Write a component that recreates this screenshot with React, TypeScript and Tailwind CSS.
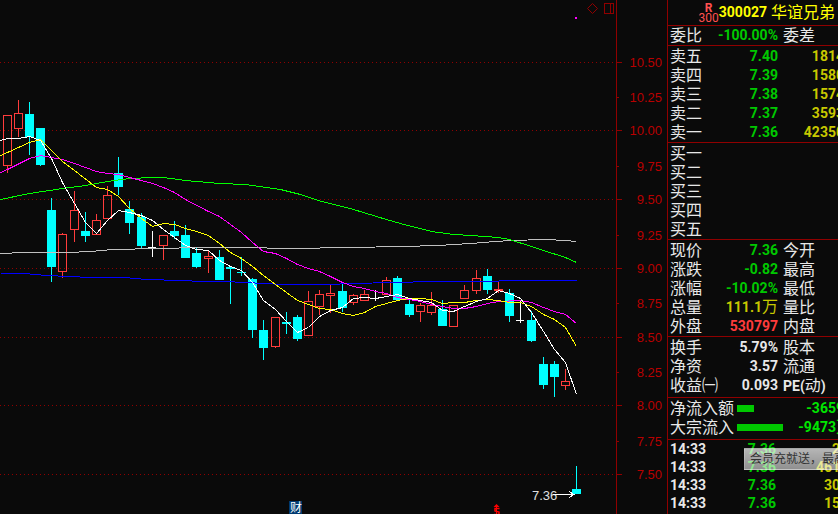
import { ReactNode } from 'react';
import clsx from 'clsx';

type Kind = 'up' | 'down' | 'flat';

// x, high, body top, body bottom, low, kind
type Candle = [number, number, number, number, number, Kind];

const candles: Candle[] = [
  [7, 115, 115, 166, 173, 'up'],
  [18, 100, 113, 129, 137, 'up'],
  [29, 102, 114, 137, 155, 'down'],
  [40, 128, 128, 165, 166, 'down'],
  [51, 198, 210, 267, 282, 'down'],
  [62, 233, 234, 272, 278, 'up'],
  [74, 191, 210, 230, 242, 'up'],
  [85, 212, 231, 236, 242, 'down'],
  [96, 214, 220, 235, 235, 'up'],
  [107, 186, 195, 219, 219, 'up'],
  [118, 157, 173, 187, 195, 'down'],
  [129, 201, 209, 223, 234, 'down'],
  [141, 213, 217, 246, 249, 'down'],
  [152, 231, 247, 248, 257, 'flat'],
  [163, 235, 235, 246, 260, 'up'],
  [174, 221, 231, 236, 239, 'down'],
  [185, 225, 235, 258, 258, 'down'],
  [196, 247, 253, 267, 268, 'down'],
  [208, 250, 256, 259, 273, 'up'],
  [219, 250, 257, 280, 280, 'down'],
  [230, 267, 267, 269, 304, 'down'],
  [241, 257, 272, 273, 276, 'down'],
  [252, 278, 279, 330, 338, 'down'],
  [263, 320, 330, 348, 360, 'down'],
  [275, 317, 317, 347, 348, 'up'],
  [286, 312, 322, 324, 334, 'down'],
  [297, 315, 317, 339, 341, 'down'],
  [308, 291, 301, 336, 336, 'up'],
  [319, 290, 294, 307, 315, 'up'],
  [330, 285, 293, 296, 313, 'up'],
  [342, 283, 291, 308, 312, 'down'],
  [353, 294, 295, 303, 305, 'up'],
  [364, 290, 294, 301, 301, 'up'],
  [375, 290, 298, 299, 301, 'flat'],
  [386, 277, 280, 295, 295, 'up'],
  [397, 276, 278, 300, 300, 'down'],
  [409, 299, 304, 315, 317, 'down'],
  [420, 303, 305, 312, 322, 'up'],
  [431, 292, 305, 313, 315, 'up'],
  [442, 300, 309, 326, 326, 'down'],
  [453, 305, 305, 327, 327, 'up'],
  [464, 285, 290, 299, 299, 'up'],
  [476, 270, 278, 291, 294, 'up'],
  [487, 269, 276, 290, 294, 'down'],
  [498, 281, 289, 291, 293, 'up'],
  [509, 289, 293, 316, 322, 'down'],
  [520, 301, 320, 321, 323, 'flat'],
  [531, 311, 320, 341, 342, 'down'],
  [543, 357, 364, 385, 389, 'down'],
  [554, 361, 364, 377, 397, 'down'],
  [565, 369, 381, 386, 390, 'up'],
  [576, 466, 489, 494, 494, 'down'],
];

const averages = [
  {
    color: '#0000ff',
    points: '0,273 24,273 46,275 90,277 124,277 146,279 180,280 203,281 225,281 283,284 335,284 345,283 400,282 425,281 470,281 528,280 540,280 560,280 576,280',
  },
  {
    color: '#c0c0c0',
    points: '0,253 24,252 68,252 90,251 112,249 158,248 200,247 240,247 292,248 348,247 403,246 437,245 470,243 495,241 510,240 545,239 565,240 576,241',
  },
  {
    color: '#00ff00',
    points: '0,199 29,193 62,188 85,185 107,181 129,178 152,177 163,177 185,180 219,183 245,184 280,189 300,194 318,200 353,209 386,219 400,223 431,231 453,234 471,235 498,237 509,239 531,246 543,250 565,257 576,262',
  },
  {
    color: '#ff00ff',
    points: '0,172 7,169 29,158 40,155 51,157 62,159 74,163 96,171 107,173 118,174 129,177 141,180 152,183 163,187 174,192 185,199 208,211 219,216 230,224 241,232 252,242 263,251 275,253 286,258 297,264 308,268 319,271 330,276 342,282 353,286 364,288 375,291 386,293 397,297 409,299 420,301 431,304 442,306 453,308 464,308 476,306 487,303 498,301 520,300 531,302 543,307 554,311 565,314 576,323',
  },
  {
    color: '#ffff00',
    points: '0,155 7,152 29,142 40,139 62,161 74,170 96,187 107,189 118,196 129,208 141,218 152,226 163,223 174,224 185,228 196,231 208,235 219,243 230,252 241,258 252,266 263,275 275,284 286,292 297,300 308,304 319,308 330,309 342,313 353,315 364,312 375,306 386,303 397,300 409,298 420,298 431,299 442,303 453,302 464,302 476,300 487,299 498,300 509,302 520,302 531,306 543,314 554,319 565,327 576,346',
  },
  {
    color: '#ffffff',
    points: '0,140 7,138 18,138 29,136 40,140 51,158 62,182 74,203 85,222 96,233 107,220 118,210 129,212 141,215 152,220 163,229 174,237 185,245 196,249 208,250 219,260 230,266 241,270 252,282 263,300 275,309 286,321 297,332 308,327 319,316 330,310 342,307 353,298 364,297 375,298 386,296 397,294 409,298 420,300 431,302 442,310 453,311 464,306 476,301 487,298 498,290 509,293 520,298 531,312 543,331 554,349 565,362 576,394',
  },
];

const scale = [
  { label: '10.50', y: 62 },
  { label: '10.25', y: 97 },
  { label: '10.00', y: 130 },
  { label: '9.75', y: 166 },
  { label: '9.50', y: 199 },
  { label: '9.25', y: 235 },
  { label: '9.00', y: 268 },
  { label: '8.75', y: 303 },
  { label: '8.50', y: 337 },
  { label: '8.25', y: 372 },
  { label: '8.00', y: 405 },
  { label: '7.75', y: 441 },
  { label: '7.50', y: 474 },
];

const asks = [
  ['卖五', '7.40', '1814'],
  ['卖四', '7.39', '1580'],
  ['卖三', '7.38', '1574'],
  ['卖二', '7.37', '3593'],
  ['卖一', '7.36', '42350'],
];

const bids = ['买一', '买二', '买三', '买四', '买五'];

const trades = [
  ['14:33', '7.36', '2'],
  ['14:33', '7.36', '461'],
  ['14:33', '7.36', '30'],
  ['14:33', '7.36', '15'],
];

function CandleShape({ candle }: { candle: Candle }) {
  const [x, high, top, bottom, low, kind] = candle;
  if (kind === 'flat') {
    return (
      <g fill="#ffffff">
        <rect x={x} y={high} width={1} height={low - high} />
        <rect x={x - 4} y={top} width={8} height={1} />
      </g>
    );
  }
  if (kind === 'down') {
    return (
      <g fill="#00ffff">
        <rect x={x} y={high} width={1} height={low - high} />
        <rect x={x - 4} y={top} width={9} height={bottom - top} />
      </g>
    );
  }
  return (
    <g fill="#ff3c3c">
      <rect x={x} y={high} width={1} height={top - high} />
      <rect x={x} y={bottom} width={1} height={low - bottom} />
      <rect x={x - 4} y={top} width={9} height={1} />
      <rect x={x - 4} y={bottom - 1} width={9} height={1} />
      <rect x={x - 4} y={top} width={1} height={bottom - top} />
      <rect x={x + 4} y={top} width={1} height={bottom - top} />
    </g>
  );
}

function Chart() {
  return (
    <svg viewBox="0 0 667 514" className="block w-full h-auto" shapeRendering="crispEdges" role="img" aria-label="K线图">
      {scale.map((s, i) => (
        <g key={s.label}>
          {i % 2 === 0 && (
            <line x1={0} x2={616} y1={s.y + 0.5} y2={s.y + 0.5} stroke="#900000" strokeDasharray="1 3" />
          )}
          <rect x={617} y={s.y} width={i % 2 === 0 ? 5 : 2} height={1} fill="#900000" />
          <text x={662} y={s.y + 5} textAnchor="end" fontSize={13} fill="#b80000">{s.label}</text>
        </g>
      ))}
      <rect x={616} y={0} width={1} height={514} fill="#900000" />

      {candles.map(c => <CandleShape key={c[0]} candle={c} />)}
      {averages.map(a => (
        <polyline key={a.color} points={a.points} transform="translate(0.5 0.5)" fill="none" stroke={a.color} />
      ))}

      <rect x={575} y={17} width={2} height={2} fill="#ff00ff" />
      <path d="M592.5 3.5l5 5-5 5-5-5z" fill="none" stroke="#900000" shapeRendering="auto" />
      <path d="M604.5 3.5h9v10h-9zM610.5 3.5v10" fill="none" stroke="#900000" />

      <text x={532} y={500} fontSize={13} fill="#e0e0e0">7.36</text>
      <path d="M553 494.5h21M569 491.5l5 3-5 3" fill="none" stroke="#ffffff" />

      <rect x={289} y={501} width={13} height={13} fill="#003a70" />
      <text x={290} y={512} fontSize={12} fill="#ffffff">财</text>

      {/* dividend marker: arrow head over a dollar shape */}
      <g fill="none" stroke="#ff0000" shapeRendering="auto">
        <path d="M493.5 507l3-3 3 3z" fill="#ff0000" stroke="none" />
        <path d="M499.5 508.5h-4.5v2.5l4 1v2.5h-5" strokeWidth={1.5} />
        <path d="M496.5 506v8" />
      </g>
    </svg>
  );
}

function Section({ children, className }: { children: ReactNode; className?: string }) {
  return <div className={clsx('border-b border-[#900000] pt-px', className)}>{children}</div>;
}

function Table({ children }: { children: ReactNode }) {
  return (
    <table className="w-44 table-fixed border-collapse">
      <colgroup>
        <col className="w-[34px]" />
        <col className="w-[76px]" />
        <col />
      </colgroup>
      <tbody>{children}</tbody>
    </table>
  );
}

function Row({ label, value, color, next }: { label: string; value?: ReactNode; color?: string; next?: ReactNode }) {
  return (
    <tr className="h-[19px]">
      <th scope="row" className="p-0 pl-0.5 text-left text-base leading-[19px] font-normal">{label}</th>
      <td className={clsx('p-0 text-right font-bold', color)}>{value}</td>
      <td className="p-0 pl-[5px] text-base leading-[19px]">{next}</td>
    </tr>
  );
}

function Flow({ label, bar, value, wide }: { label: string; bar: string; value: ReactNode; wide?: boolean }) {
  return (
    <div className="flex h-[19px] w-44 items-center pl-0.5">
      <span className="text-base leading-[19px]">{label}</span>
      <span className={clsx('ml-[3px] h-[7px] bg-[#00c800]', bar)} />
      <span className={clsx('ml-auto font-bold text-[#00e600]', wide && '-mr-2')}>{value}</span>
    </div>
  );
}

function QuotePanel() {
  const green = 'text-[#00c800]';
  const wan = <span className="text-base leading-none font-normal">万</span>;
  return (
    <aside className="w-[171px] shrink-0 overflow-hidden border-l border-[#900000] font-['Roboto','Noto_Sans_CJK_SC',sans-serif] text-sm leading-[19px] whitespace-nowrap text-[#e8e8e8]">
      <header className="flex h-[26px] items-center justify-end border-b border-[#900000] pr-[3px] text-[#ffff00]">
        <div className="flex flex-col items-center text-xs leading-[10px] text-[#ff5050]">
          <b>R</b>
          <span>300</span>
        </div>
        <b>300027</b>
        <h1 className="ml-1 text-base">华谊兄弟</h1>
      </header>

      <div className="border-b border-[#900000]">
        <Table>
          <Row label="委比" value="-100.00%" color={green} next="委差" />
        </Table>
      </div>

      <Section>
        <Table>
          {asks.map(([label, price, volume]) => (
            <tr key={label} className="h-[19px]">
              <th scope="row" className="p-0 pl-0.5 text-left text-base leading-[19px] font-normal">{label}</th>
              <td className="p-0 text-right font-bold text-[#00c800]">{price}</td>
              <td className="p-0 text-right font-bold text-[#c8c800]">{volume}</td>
            </tr>
          ))}
        </Table>
      </Section>

      <Section>
        <Table>
          {bids.map(label => <Row key={label} label={label} />)}
        </Table>
      </Section>

      <Section>
        <Table>
          <Row label="现价" value="7.36" color={green} next="今开" />
          <Row label="涨跌" value="-0.82" color={green} next="最高" />
          <Row label="涨幅" value="-10.02%" color={green} next="最低" />
          <Row label="总量" value={<>111.1{wan}</>} color="text-[#c8c800]" next="量比" />
          <Row label="外盘" value="530797" color="text-[#ff3c3c]" next="内盘" />
        </Table>
      </Section>

      <Section className="pb-0.5">
        <Table>
          <Row label="换手" value="5.79%" next="股本" />
          <Row label="净资" value="3.57" next="流通" />
          <Row
            label="收益㈠"
            value="0.093"
            next={<><b className="text-sm leading-none">PE(</b>动<b className="text-sm leading-none">)</b></>}
          />
        </Table>
      </Section>

      <Section className="pb-0.5">
        <Flow label="净流入额" bar="w-[17px]" value="-3659" />
        <Flow label="大宗流入" bar="w-[46px]" value={<>-9473{wan}</>} wide />
      </Section>

      <div className="relative">
        <table className="w-[172px] table-fixed border-collapse font-bold">
          <tbody>
            {trades.map(([time, price, volume], i) => (
              <tr key={i} className="h-[18px] leading-[18px]">
                <td className="w-10 p-0 pl-0.5">{time}</td>
                <td className="w-[68px] p-0 text-right text-[#00c800]">{price}</td>
                <td className="p-0 text-right text-[#c8c800]">{volume}</td>
              </tr>
            ))}
          </tbody>
        </table>
        <div className="absolute top-2 left-[76px] h-[22px] border border-white/20 bg-linear-to-b from-white/70 to-white/55 pl-[5px] text-xs leading-5 text-[#333]">
          会员充就送，最高
        </div>
      </div>
    </aside>
  );
}

export default function App() {
  return (
    <div className="flex min-h-screen w-full overflow-hidden bg-[#0a0a0a] font-['Liberation_Sans','Noto_Sans_CJK_SC',sans-serif]">
      <main className="min-w-0 flex-1">
        <Chart />
      </main>
      <QuotePanel />
    </div>
  );
}
